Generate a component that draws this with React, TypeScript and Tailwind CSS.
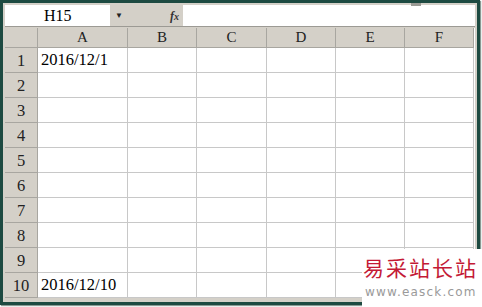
import React from "react";

const cols = ["A", "B", "C", "D", "E", "F"];
const rows = [1, 2, 3, 4, 5, 6, 7, 8, 9, 10];

const cellValue = (row: number, col: string) => {
  if (col !== "A") return "";
  if (row === 1) return "2016/12/1";
  if (row === 10) return "2016/12/10";
  return "";
};

export default function App() {
  return (
    <div
      className="relative w-[482px] h-[307px] bg-white overflow-hidden"
      style={{ fontFamily: '"Liberation Serif", "DejaVu Serif", serif' }}
    >
      <div className="relative w-[480px] h-[305px] border-[3px] border-[#1d4a41] bg-[#d4d0c8] pt-[2px] pl-[2px] pr-[2px] shadow-[1px_1px_1px_#8a9a94]">
        {/* splitter marker */}
        <div className="absolute right-[56px] top-0 w-[10px] h-[3px] bg-[#9a9a94]" />

        {/* formula bar */}
        <div className="flex h-[22px] border-b border-[#9c9a94]">
          <div className="w-[105px] bg-white flex items-center pl-[39px] text-[16px] text-black">
            H15
          </div>
          <div className="w-[73px] flex items-center justify-between pl-[5px] pr-[4px]">
            <span className="text-[8px] text-[#222]">▼</span>
            <span className="text-[12px] italic font-bold text-[#333]">
              f<span className="text-[10px]">x</span>
            </span>
          </div>
          <div className="flex-1 bg-white" />
        </div>

        {/* grid */}
        <div className="mt-[1px] grid grid-cols-[33px_90px_69px_70px_69px_69px_69px] grid-rows-[20px_repeat(10,25px)] bg-white">
          <div className="bg-[#d4d0c8] border-r border-b border-[#a8a6a0]" />
          {cols.map((c) => (
            <div
              key={c}
              className="bg-[#d4d0c8] border-r border-b border-[#a8a6a0] flex items-center justify-center text-[15px] text-[#222]"
            >
              {c}
            </div>
          ))}
          {rows.map((r) => (
            <React.Fragment key={r}>
              <div className="bg-[#d4d0c8] border-r border-b border-[#a8a6a0] flex items-end justify-center pb-[3px] text-[16.5px] leading-none text-[#222]">
                {r}
              </div>
              {cols.map((c) => (
                <div
                  key={c}
                  className="border-r border-b border-[#c8c8c8] flex items-end pl-[3px] pb-[4px] text-[16.5px] text-black leading-none"
                >
                  {cellValue(r, c)}
                </div>
              ))}
            </React.Fragment>
          ))}
        </div>
      </div>

      {/* watermark */}
      <div className="absolute left-[362px] top-[249px] w-[120px] h-[58px] bg-white flex flex-col pt-[5px] pl-[1px] whitespace-nowrap">
        <div
          className="text-[21px] leading-[26px] text-[#c41a36] tracking-[2px]"
          style={{ fontFamily: '"Noto Sans CJK SC", sans-serif' }}
        >
          易采站长站
        </div>
        <div
          className="mt-[6px] pl-[2px] text-[12px] leading-[12px] text-[#9a9a9a] tracking-[1.2px]"
          style={{ fontFamily: '"DejaVu Sans", sans-serif' }}
        >
          www.easck.com
        </div>
      </div>
    </div>
  );
}
